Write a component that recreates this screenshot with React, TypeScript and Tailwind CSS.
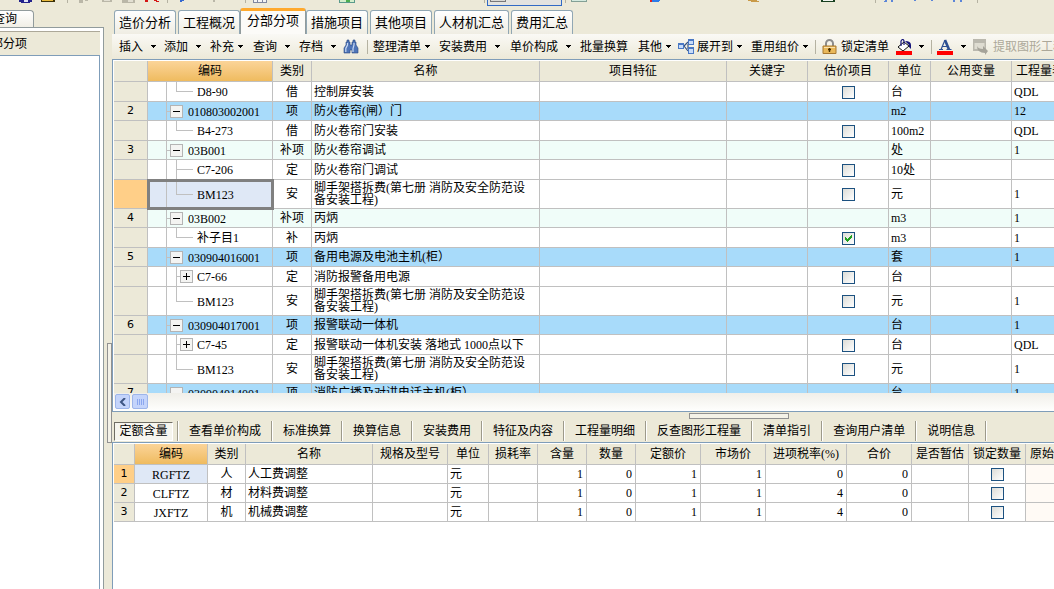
import React from "react";

type Row = {
  no?: string;
  code: string;
  level: "item" | "child";
  color?: string;
  node?: "minus" | "plus";
  last?: boolean;
  tall?: boolean;
  selected?: boolean;
  kind: string;
  name: string;
  check?: boolean;
  unit: string;
  qty?: string;
};

const SCAFFOLD = "脚手架搭拆费(第七册 消防及安全防范设\n备安装工程)";
const BLUE = "bg-[#a8dbfa]";
const MINT = "bg-[#f0fdf9]";

const rows: Row[] = [
  { code: "D8-90", level: "child", last: true, kind: "借", name: "控制屏安装", check: false, unit: "台", qty: "QDL" },
  { no: "2", code: "010803002001", level: "item", color: BLUE, kind: "项", name: "防火卷帘(闸）门", unit: "m2", qty: "12" },
  { code: "B4-273", level: "child", last: true, kind: "借", name: "防火卷帘门安装", check: false, unit: "100m2", qty: "QDL" },
  { no: "3", code: "03B001", level: "item", color: MINT, kind: "补项", name: "防火卷帘调试", unit: "处", qty: "1" },
  { code: "C7-206", level: "child", kind: "定", name: "防火卷帘门调试", check: false, unit: "10处" },
  { code: "BM123", level: "child", last: true, tall: true, selected: true, kind: "安", name: SCAFFOLD, check: false, unit: "元", qty: "1" },
  { no: "4", code: "03B002", level: "item", color: MINT, kind: "补项", name: "丙炳", unit: "m3", qty: "1" },
  { code: "补子目1", level: "child", last: true, kind: "补", name: "丙炳", check: true, unit: "m3", qty: "1" },
  { no: "5", code: "030904016001", level: "item", color: BLUE, kind: "项", name: "备用电源及电池主机(柜）", unit: "套", qty: "1" },
  { code: "C7-66", level: "child", node: "plus", kind: "定", name: "消防报警备用电源", check: false, unit: "台" },
  { code: "BM123", level: "child", last: true, tall: true, kind: "安", name: SCAFFOLD, check: false, unit: "元", qty: "1" },
  { no: "6", code: "030904017001", level: "item", color: BLUE, kind: "项", name: "报警联动一体机", unit: "台", qty: "1" },
  { code: "C7-45", level: "child", node: "plus", kind: "定", name: "报警联动一体机安装 落地式 1000点以下", check: false, unit: "台", qty: "QDL" },
  { code: "BM123", level: "child", last: true, tall: true, kind: "安", name: SCAFFOLD, check: false, unit: "元", qty: "1" },
  { no: "7", code: "030904014001", level: "item", color: BLUE, kind: "项", name: "消防广播及对讲电话主机(柜）", unit: "台", qty: "1" },
];

const resources = [
  { code: "RGFTZ", kind: "人", name: "人工费调整", rate: "0" },
  { code: "CLFTZ", kind: "材", name: "材料费调整", rate: "4" },
  { code: "JXFTZ", kind: "机", name: "机械费调整", rate: "4" },
];

const mainColumns = [
  { title: "", width: "w-[34px]" },
  { title: "编码", width: "w-[125px]" },
  { title: "类别", width: "w-[39px]" },
  { title: "名称", width: "w-[228px]" },
  { title: "项目特征", width: "w-[187px]" },
  { title: "关键字", width: "w-[81px]" },
  { title: "估价项目", width: "w-[81px]" },
  { title: "单位", width: "w-[42px]" },
  { title: "公用变量", width: "w-[81px]" },
  { title: "工程量表达式", width: "w-[81px]" },
];

const detailColumns = [
  { title: "", width: "w-[21px]" },
  { title: "编码", width: "w-[73px]" },
  { title: "类别", width: "w-[38px]" },
  { title: "名称", width: "w-[127px]" },
  { title: "规格及型号", width: "w-[75px]" },
  { title: "单位", width: "w-[41px]" },
  { title: "损耗率", width: "w-[49px]" },
  { title: "含量", width: "w-[49px]" },
  { title: "数量", width: "w-[49px]" },
  { title: "定额价", width: "w-[65px]" },
  { title: "市场价", width: "w-[65px]" },
  { title: "进项税率(%)", width: "w-[81px]" },
  { title: "合价", width: "w-[65px]" },
  { title: "是否暂估", width: "w-[57px]" },
  { title: "锁定数量", width: "w-[57px]" },
  { title: "原始含量", width: "w-[57px]" },
];

const topTabs = ["造价分析", "工程概况", "分部分项", "措施项目", "其他项目", "人材机汇总", "费用汇总"];
const bottomTabs = ["查看单价构成", "标准换算", "换算信息", "安装费用", "特征及内容", "工程量明细", "反查图形工程量", "清单指引", "查询用户清单", "说明信息"];

const cell = "border-r border-b border-[#c0c0c0] p-0 overflow-hidden whitespace-pre";
const rowHead = "border-r border-b border-[#c0c0c0] p-0 font-normal text-center text-[11px] font-['DejaVu_Sans',sans-serif]";

const Caret = () => (
  <svg className="w-[5px] h-[3px] shrink-0" viewBox="0 0 5 3" shapeRendering="crispEdges">
    <path d="M0 0h5v1H4v1H3v1H2V2H1V1H0z" fill="#000" />
  </svg>
);

const Separator = () => <span className="w-px h-3.5 shrink-0 bg-[#b5b2a2]"></span>;

const ToolButton = ({ label, width, wide }: { label: string; width: string; wide?: boolean }) => (
  <button className={`${width} shrink-0 flex items-center ${wide ? "gap-2" : "gap-1"}`}>
    {label}
    <Caret />
  </button>
);

const CheckBox = ({ label, checked }: { label: string; checked?: boolean }) => (
  <label className="relative block w-[13px] h-[13px] mx-auto">
    <input
      type="checkbox"
      aria-label={label}
      defaultChecked={checked}
      className="peer block appearance-none w-[13px] h-[13px] border border-[#1c5180] bg-linear-to-br from-[#dcdcd7] to-white"
    />
    <svg className="absolute inset-0 hidden peer-checked:block" viewBox="0 0 13 13" shapeRendering="crispEdges">
      <path d="M3 5h1v1h1v1h1V6h1V5h1V4h1V3h1v3H9v1H8v1H7v1H6v1H5V9H4V8H3z" fill="#21a121" />
    </svg>
  </label>
);

const NodeBox = ({ plus }: { plus?: boolean }) => (
  <button aria-label={plus ? "展开" : "折叠"} className="w-[13px] h-[13px] shrink-0 self-center">
    <svg viewBox="0 0 13 13" shapeRendering="crispEdges">
      <rect x="0" y="0" width="13" height="13" fill="#b4b4b4" />
      <rect x="1" y="1" width="11" height="11" fill="#f4f4f2" />
      <path d={plus ? "M3 6h7v1H3zM6 3h1v7H6z" : "M3 6h7v1H3z"} fill="#000" />
    </svg>
  </button>
);

const TreeCell = ({ row }: { row: Row }) => {
  const height = row.tall ? "h-[28px]" : row.level === "item" ? "h-[18px]" : "h-[19px]";
  return (
    <div className={`flex ${height}`}>
      <span className="w-[19px] shrink-0 border-r border-[#c0c0c0]"></span>
      {row.level === "item" ? (
        <>
          <span className="w-[3px] h-px shrink-0 self-center bg-[#c0c0c0]"></span>
          <NodeBox />
          <span className="self-center pl-[5px] pt-px">{row.code}</span>
        </>
      ) : (
        <>
          <span className={`ml-[9px] shrink-0 flex flex-col ${row.node ? "w-1" : "w-[17px]"}`}>
            <span className="flex-1 border-l border-b border-[#c0c0c0]"></span>
            <span className={`flex-1 ${row.last ? "" : "border-l border-[#c0c0c0]"}`}></span>
          </span>
          {row.node && <NodeBox plus />}
          <span className="self-center pl-1 pt-px">{row.code}</span>
        </>
      )}
    </div>
  );
};

const TableHead = ({ columns }: { columns: { title: string; width: string }[] }) => (
  <thead>
    <tr>
      {columns.map((col, index) => (
        <th
          key={index}
          className={`${col.width} h-[21px] p-0 font-normal whitespace-nowrap overflow-hidden border-r border-b border-[#c0c0c0] ${
            index === 1 ? "bg-linear-to-b from-[#fbd498] to-[#efbb5e]" : "bg-[#ece9d8]"
          }`}
        >
          {col.title}
        </th>
      ))}
    </tr>
  </thead>
);

const MainGrid = () => (
  <div className="h-[332px] overflow-hidden">
    <table className="table-fixed w-[979px] border-separate border-spacing-0 leading-[12px] font-['Liberation_Serif','Noto_Sans_CJK_SC',serif]">
      <TableHead columns={mainColumns} />
      <tbody>
        {rows.map((row, index) => (
          <tr key={index} className={row.color ?? "bg-white"}>
            <th className={`${rowHead} ${row.selected ? "bg-[#ffcf88]" : "bg-[#ece9d8]"}`}>{row.no}</th>
            <td
              className={
                row.selected
                  ? "relative z-10 p-0 border-r border-b border-[#c0c0c0] bg-[#dfe8f6] outline-3 -outline-offset-2 outline-[#808080]"
                  : cell
              }
            >
              <TreeCell row={row} />
            </td>
            <td className={`${cell} text-center`}>{row.kind}</td>
            <td className={`${cell} pl-0.5`}>{row.name}</td>
            <td className={cell}></td>
            <td className={cell}></td>
            <td className={`${cell} pt-px`}>
              {row.check !== undefined && <CheckBox label="估价项目" checked={row.check} />}
            </td>
            <td className={`${cell} pl-0.5`}>{row.unit}</td>
            <td className={cell}></td>
            <td className={`${cell} pl-0.5`}>{row.qty}</td>
          </tr>
        ))}
      </tbody>
    </table>
  </div>
);

const DetailGrid = () => (
  <div className="flex-1 overflow-hidden bg-white border-t border-l border-[#7f9db9] pt-px pl-px">
    <table className="table-fixed w-[969px] border-separate border-spacing-0 leading-[12px] font-['Liberation_Serif','Noto_Sans_CJK_SC',serif]">
      <TableHead columns={detailColumns} />
      <tbody>
        {resources.map((res, index) => (
          <tr key={res.code} className="h-[19px]">
            <th className={`${rowHead} ${index === 0 ? "bg-[#ffcf88]" : "bg-[#ece9d8]"}`}>{index + 1}</th>
            <td className={`${cell} text-center pt-px ${index === 0 ? "bg-[#dfe8f6]" : ""}`}>{res.code}</td>
            <td className={`${cell} text-center`}>{res.kind}</td>
            <td className={`${cell} pl-0.5`}>{res.name}</td>
            <td className={cell}></td>
            <td className={`${cell} pl-0.5`}>元</td>
            <td className={cell}></td>
            <td className={`${cell} text-right pr-[3px]`}>1</td>
            <td className={`${cell} text-right pr-[3px]`}>0</td>
            <td className={`${cell} text-right pr-[3px]`}>1</td>
            <td className={`${cell} text-right pr-[3px]`}>1</td>
            <td className={`${cell} text-right pr-[3px]`}>{res.rate}</td>
            <td className={`${cell} text-right pr-[3px]`}>0</td>
            <td className={cell}></td>
            <td className={cell}>
              <CheckBox label="锁定数量" />
            </td>
            <td className={`${cell} bg-[#fffaf5]`}></td>
          </tr>
        ))}
      </tbody>
    </table>
  </div>
);

/* Lower edge of the standard toolbar, the rest is scrolled out of the window */
const IconStrip = () => (
  <svg className="block h-2 w-[1054px] shrink-0" viewBox="0 0 1054 8" shapeRendering="crispEdges">
    <path d="M19 0h13v2h-2v1H21V2h-2z" fill="#22228c" />
    <path d="M24 0h4v2h-4z" fill="#dfe3f5" />
    <path d="M41 0h14v2H41z" fill="#3c3208" />
    <path d="M42 0h11v1H42z" fill="#e8b93c" />
    <path d="M67 0h1v3h-1zM167 0h1v3h-1zM245 0h1v3h-1zM484 0h1v3h-1zM565 0h1v3h-1zM875 0h1v3h-1zM977 0h1v3h-1z" fill="#b5b2a2" />
    <path d="M79 0h4v3h-4zM85 0h3v1h-3zM102 0h10v2h-10zM122 0h13v3h-13zM213 0h2v2h-2z" fill="#bab7a8" />
    <path d="M104 0h6v1h-6zM128 0h5v2h-5z" fill="#e2dfd2" />
    <path d="M145 0h3v2h-3zM154 0h3v1h-3zM156 1h3v1h-3z" fill="#d41414" />
    <path d="M180 0h4v1h-2v1h-2z" fill="#3468d0" />
    <path d="M253 0h14v3h-14z" fill="#8088a0" />
    <path d="M254 0h3v2h-3zM258 0h4v2h-4zM263 0h3v2h-3z" fill="#f4f4f4" />
    <path d="M339 0h16v3h-16z" fill="#5a9a8c" />
    <path d="M340 0h14v2h-14z" fill="#d4eecb" />
    <path d="M346 0h4v2h-4z" fill="#4cae50" />
    <path d="M487 0h75v6h-75z" fill="#316ac5" />
    <path d="M488 0h73v5h-73z" fill="#e3e3e0" />
    <path d="M490 0h16v2h-16z" fill="#77777a" />
    <path d="M491 0h14v1h-14z" fill="#d8d8d4" />
    <path d="M571 0h16v2h-16z" fill="#83a096" />
    <path d="M572 0h14v1h-14z" fill="#d5eadf" />
    <path d="M650 0h2v2h-2z" fill="#e02020" />
    <path d="M652 0h8v1h-1v1h-7z" fill="#2d7be8" />
    <path d="M748 0h9v1h2v1h-8V1h-3z" fill="#c99a48" />
    <path d="M821 0h14v2h-14z" fill="#184020" />
    <path d="M823 0h10v1h-10z" fill="#f2f5f0" />
    <path d="M885 0h2v2h-3V1h1zM891 0h2v2h-2zM914 0h2v1h-2zM931 0h2v1h-2zM953 0h2v2h-2zM960 0h2v2h-2z" fill="#5b85d8" />
  </svg>
);

const Toolbar = () => (
  <div className="h-[25px] shrink-0 flex items-center overflow-hidden whitespace-nowrap pl-[7px] bg-linear-to-b from-[#faf9f5] to-[#ece9d8]">
    <ToolButton label="插入" width="w-[45px]" wide />
    <ToolButton label="添加" width="w-[46px]" wide />
    <ToolButton label="补充" width="w-[43px]" />
    <ToolButton label="查询" width="w-[46px]" wide />
    <ToolButton label="存档" width="w-[44px]" wide />
    <button aria-label="查找" className="w-6 shrink-0">
      <svg className="w-4 h-4" viewBox="0 0 16 16">
        <path d="M4 1h2v2h1v3h2V3h1V1h2v2h1v3l2 3v5H9v-3H7v3H1V9l2-3V3h1z" fill="#4f75b8" stroke="#2a4680" strokeWidth=".6" />
        <path d="M4.500 4v2L2.800 9.500V13M11 4v2l-1 3.500V13" stroke="#c8d9f4" strokeWidth="1.2" fill="none" />
      </svg>
    </button>
    <Separator />
    <span className="w-[5px] shrink-0"></span>
    <ToolButton label="整理清单" width="w-[66px]" />
    <ToolButton label="安装费用" width="w-[71px]" wide />
    <ToolButton label="单价构成" width="w-[70px]" wide />
    <button className="w-[58px] shrink-0 text-left">批量换算</button>
    <ToolButton label="其他" width="w-[40px]" />
    <button className="w-[73px] shrink-0 flex items-center">
      <svg className="w-4 h-4 mr-[3px] shrink-0" viewBox="0 0 16 16">
        <path d="M6 7l4-4M6 7l4 5M10 5v5" stroke="#35517f" strokeWidth="1.2" fill="none" />
        <path d="M0 4h6v6H0zM10 0h6v6h-6zM10 8h6v7h-6z" fill="#4a78c4" />
        <path d="M1 6h4v3H1zM11 2h4v3h-4zM11 10h4v4h-4z" fill="#c9dcf8" />
      </svg>
      展开到
      <span className="pl-1">
        <Caret />
      </span>
    </button>
    <ToolButton label="重用组价" width="w-[64px]" />
    <Separator />
    <button className="w-[80px] pl-1.5 shrink-0 flex items-center gap-1">
      <svg className="w-[15px] h-4 shrink-0" viewBox="0 0 15 16">
        <path d="M4 7V4.500a3.500 3.500 0 0 1 7 0V7" fill="none" stroke="#8c8c8c" strokeWidth="2" />
        <path d="M1 7h13v7.500H1z" fill="#e9b85a" stroke="#a87830" />
        <path d="M2 8.500h11" stroke="#fbe3ae" />
        <path d="M7.500 9v4M6 10.500h3" stroke="#4a3000" strokeWidth="1.4" />
      </svg>
      锁定清单
    </button>
    <button aria-label="背景颜色" className="w-[35px] shrink-0 flex items-center gap-1.5">
      <svg className="w-[17px] h-4 shrink-0" viewBox="0 0 17 16">
        <path d="M8 3l5 4-6 5-5-4z" fill="#fff" stroke="#111" />
        <path d="M5 7V2q2-3 3 0v4" fill="none" stroke="#15157a" strokeWidth="1.2" />
        <path d="M9 2q6 0 6 4v4l-2-2V6z" fill="#15157a" />
        <path d="M0 12h16v4H0z" fill="#f00" />
      </svg>
      <Caret />
    </button>
    <Separator />
    <button aria-label="字体颜色" className="w-[41px] pl-[5px] shrink-0 flex items-center gap-2">
      <svg className="w-4 h-4 shrink-0" viewBox="0 0 16 16">
        <path d="M4 10.500L8 1" stroke="#2d4f92" strokeWidth="1.2" />
        <path d="M8 1l4 9.500" stroke="#2d4f92" strokeWidth="2.600" />
        <path d="M5 7.500h5M2 10.500h4M9.500 10.500h5" stroke="#2d4f92" strokeWidth="1.200" />
        <path d="M0 12h16v4H0z" fill="#f00" />
      </svg>
      <Caret />
    </button>
    <button disabled className="shrink-0 flex items-center gap-1 text-[#aca899]">
      <svg className="w-4 h-4 shrink-0" viewBox="0 0 16 16">
        <path d="M0 0h13v12H0z" fill="#bab8ae" />
        <path d="M1.500 4h10v6h-10z" fill="#dedcd1" />
        <path d="M4 7q1 3 6 3V7l5 5-3 4v-2q-8 0-8-7z" fill="#a5a399" />
      </svg>
      提取图形工程量
    </button>
  </div>
);

const SideNav = () => (
  <aside className="w-[104px] shrink-0 flex flex-col">
    <div className="mt-0.5 w-[34px] h-[17px] pr-4 flex items-center justify-end overflow-hidden whitespace-nowrap rounded-tr-sm border-t border-r border-[#919b9c] bg-linear-to-b from-white to-[#f1efe6]">
      查询
    </div>
    <div className="flex-1 flex flex-col bg-white border-t border-r border-[#919b9c] pt-[3px] pr-[3px]">
      <div className="h-[25px] shrink-0 border-t border-b border-t-[#aca899] border-b-[#7f9db9] bg-[#ece9d8] flex">
        <div className="w-[27px] flex items-center justify-end overflow-hidden whitespace-nowrap">部分项</div>
      </div>
      <div className="flex-1 border-r border-[#7f9db9]"></div>
    </div>
  </aside>
);

const App: React.FC = () => {
  return (
    <div className="h-screen flex flex-col overflow-hidden bg-[#ece9d8] text-black text-[12px] leading-[14px] font-['Liberation_Sans','Noto_Sans_CJK_SC',sans-serif]">
      <IconStrip />
      <div className="flex-1 min-h-0 flex">
        <SideNav />

        {/* Vertical splitter */}
        <div className="w-2 shrink-0 flex flex-col items-end">
          <div className="mt-[335px] w-[5px] h-[100px] border border-[#919191] bg-[#f4f2e8]"></div>
        </div>

        <main className="flex-1 min-w-0 flex flex-col">
          <div className="h-[26px] shrink-0 flex items-end gap-0.5 pl-0.5 text-[13px]">
            {topTabs.map((tab) =>
              tab === "分部分项" ? (
                <button
                  key={tab}
                  className="relative z-10 -mx-0.5 h-[26px] px-1.5 pb-1 shrink-0 rounded-t-[3px] border-x border-t-3 border-x-[#919b9c] border-t-[#ffa92c] bg-[#fcfbf8]"
                >
                  {tab}
                </button>
              ) : (
                <button
                  key={tab}
                  className="h-6 px-1 shrink-0 rounded-t-[3px] border border-b-0 border-[#91a7b4] bg-linear-to-b from-white to-[#efede3]"
                >
                  {tab}
                </button>
              )
            )}
          </div>

          <Toolbar />

          <div className="shrink-0 overflow-hidden border-y border-l border-[#7f9db9] bg-white py-px pl-px">
            <MainGrid />
            {/* Horizontal scrollbar */}
            <div className="h-[17px] flex items-center gap-0.5 pl-px bg-linear-to-b from-[#f0efe9] to-[#fefefc]">
              <button aria-label="向左滚动" className="w-[15px] h-[15px] rounded-xs border border-[#9db5ea] bg-[#c4d4fb] flex items-center justify-center">
                <svg className="w-2 h-2" viewBox="0 0 8 8">
                  <path d="M6 0L2 4l4 4" fill="none" stroke="#3d5583" strokeWidth="2" />
                </svg>
              </button>
              <div className="w-4 h-[15px] rounded-xs border border-[#9db5ea] bg-[#c4d4fb] flex items-center justify-center gap-px">
                <span className="w-px h-1.5 bg-[#8ba7ef]"></span>
                <span className="w-px h-1.5 bg-[#8ba7ef]"></span>
                <span className="w-px h-1.5 bg-[#8ba7ef]"></span>
                <span className="w-px h-1.5 bg-[#8ba7ef]"></span>
              </div>
            </div>
          </div>

          {/* Horizontal splitter */}
          <div className="h-2 shrink-0 flex items-center justify-center pl-[312px]">
            <div className="w-[100px] h-1.5 border border-[#919191] bg-[#f4f2e8]"></div>
          </div>

          <div className="h-[22px] shrink-0 flex items-center pl-0.5 overflow-hidden whitespace-nowrap">
            <button className="w-[59px] h-[19px] mr-1 shrink-0 border border-t-[#6f6d63] border-l-[#6f6d63] border-b-white border-r-white bg-[#f6f5ee]">
              定额含量
            </button>
            {bottomTabs.map((tab) => (
              <React.Fragment key={tab}>
                <span className="w-0.5 h-5 shrink-0 border-l border-[#9d9a8b] bg-white"></span>
                <button className="px-2.5 shrink-0">{tab}</button>
              </React.Fragment>
            ))}
            <span className="w-0.5 h-5 shrink-0 border-l border-[#9d9a8b] bg-white"></span>
          </div>

          <DetailGrid />
        </main>
      </div>
    </div>
  );
};

export default App;
